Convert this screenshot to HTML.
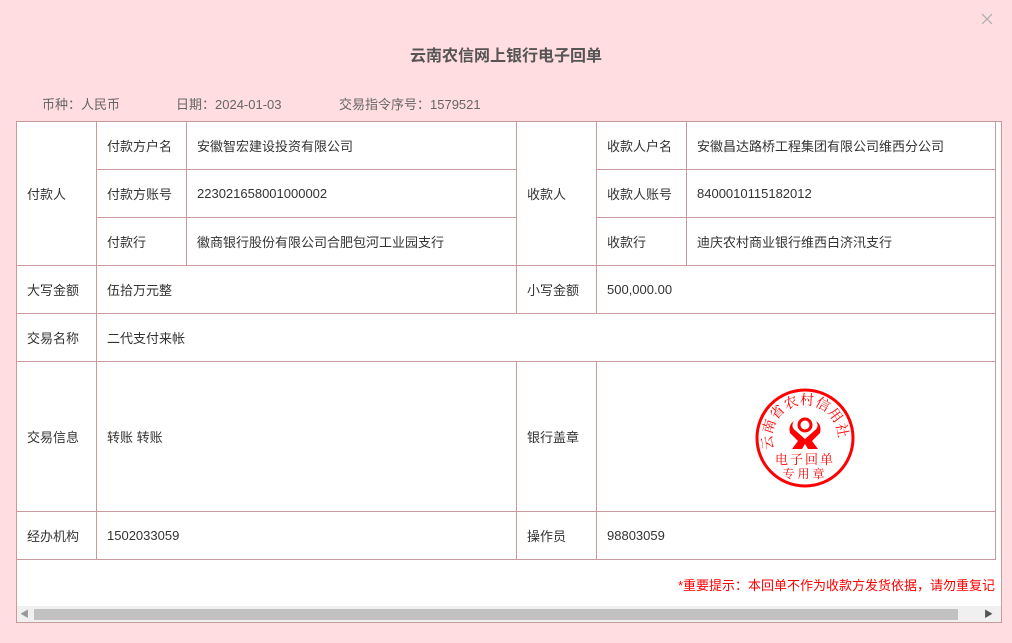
<!DOCTYPE html>
<html><head><meta charset="utf-8"><style>
*{margin:0;padding:0;box-sizing:border-box}
body{width:1012px;height:643px;background:#ffdde0;font-family:"Liberation Sans","Noto Sans CJK SC",sans-serif;position:relative;overflow:hidden;color:#333;font-size:13px}
.t{position:absolute;white-space:nowrap}
.box{position:absolute;left:16px;top:121px;width:986px;height:502px;border:1px solid #c9999c;background:#fff;overflow:hidden}
.c{position:absolute;border-right:1px solid #c9999c;border-bottom:1px solid #c9999c;display:flex;align-items:center;padding-left:10px;white-space:nowrap;background:#fff}
</style></head><body>
<svg style="position:absolute;left:981px;top:13px" width="12" height="12"><path d="M1 1L11 11M11 1L1 11" stroke="#aaa" stroke-width="1.2"/></svg>
<div class="t" style="left:0;width:1012px;text-align:center;top:42px;font-size:16px;font-weight:bold;color:#555">云南农信网上银行电子回单</div>
<div class="t" style="left:42px;top:94px;color:#666">币种：人民币</div>
<div class="t" style="left:176px;top:94px;color:#666">日期：2024-01-03</div>
<div class="t" style="left:339px;top:94px;color:#666">交易指令序号：1579521</div>
<div class="box">
<div class="c" style="left:0;top:0;width:80px;height:144px">付款人</div>
<div class="c" style="left:80px;top:0;width:90px;height:48px">付款方户名</div>
<div class="c" style="left:170px;top:0;width:330px;height:48px">安徽智宏建设投资有限公司</div>
<div class="c" style="left:80px;top:48px;width:90px;height:48px">付款方账号</div>
<div class="c" style="left:170px;top:48px;width:330px;height:48px">223021658001000002</div>
<div class="c" style="left:80px;top:96px;width:90px;height:48px">付款行</div>
<div class="c" style="left:170px;top:96px;width:330px;height:48px">徽商银行股份有限公司合肥包河工业园支行</div>
<div class="c" style="left:500px;top:0;width:80px;height:144px">收款人</div>
<div class="c" style="left:580px;top:0;width:90px;height:48px">收款人户名</div>
<div class="c" style="left:670px;top:0;width:309px;height:48px">安徽昌达路桥工程集团有限公司维西分公司</div>
<div class="c" style="left:580px;top:48px;width:90px;height:48px">收款人账号</div>
<div class="c" style="left:670px;top:48px;width:309px;height:48px">8400010115182012</div>
<div class="c" style="left:580px;top:96px;width:90px;height:48px">收款行</div>
<div class="c" style="left:670px;top:96px;width:309px;height:48px">迪庆农村商业银行维西白济汛支行</div>
<div class="c" style="left:0;top:144px;width:80px;height:48px">大写金额</div>
<div class="c" style="left:80px;top:144px;width:420px;height:48px">伍拾万元整</div>
<div class="c" style="left:500px;top:144px;width:80px;height:48px">小写金额</div>
<div class="c" style="left:580px;top:144px;width:399px;height:48px">500,000.00</div>
<div class="c" style="left:0;top:192px;width:80px;height:48px">交易名称</div>
<div class="c" style="left:80px;top:192px;width:899px;height:48px">二代支付来帐</div>
<div class="c" style="left:0;top:240px;width:80px;height:150px">交易信息</div>
<div class="c" style="left:80px;top:240px;width:420px;height:150px">转账 转账</div>
<div class="c" style="left:500px;top:240px;width:80px;height:150px">银行盖章</div>
<div class="c" style="left:580px;top:240px;width:399px;height:150px"></div>
<div class="c" style="left:0;top:390px;width:80px;height:48px">经办机构</div>
<div class="c" style="left:80px;top:390px;width:420px;height:48px">1502033059</div>
<div class="c" style="left:500px;top:390px;width:80px;height:48px">操作员</div>
<div class="c" style="left:580px;top:390px;width:399px;height:48px">98803059</div>
<div class="t" style="left:661px;top:453px;color:#f00">*重要提示：本回单不作为收款方发货依据，请勿重复记</div>
<div style="position:absolute;left:0;top:484px;width:986px;height:16px;background:#f0f0f0"></div>
<div style="position:absolute;left:17px;top:487px;width:924px;height:11px;background:#c1c1c1"></div>
<div class="t" style="left:3px;top:485px;font-size:9px;color:#999">◀</div>
<div class="t" style="left:967px;top:485px;font-size:9px;color:#555">▶</div>
</div>
<svg style="position:absolute;left:754px;top:387px" width="102" height="102" viewBox="0 0 102 102">
<defs><path id="arc" d="M20 62 A33 33 0 1 1 82 62"/></defs>
<circle cx="51" cy="51" r="48" fill="none" stroke="#f00" stroke-width="3"/>
<path d="M40 34 q-6 4 -4 12 l8 8 l-6 8 h10 l3 -5 l3 5 h10 l-6 -8 l8 -8 q2 -8 -4 -12 q4 6 -2 10 l-9 8 l-9 -8 q-6 -4 -2 -10z" fill="#f00"/>
<circle cx="51" cy="38" r="6" fill="none" stroke="#f00" stroke-width="3"/>
<text font-size="14" fill="#f00" font-family="Noto Serif CJK SC,serif" letter-spacing="0.5"><textPath href="#arc" startOffset="0">云南省农村信用社</textPath></text>
<text x="51" y="77" font-size="13" fill="#f00" text-anchor="middle" font-family="Noto Serif CJK SC,serif" letter-spacing="2">电子回单</text>
<text x="51" y="91" font-size="12" fill="#f00" text-anchor="middle" font-family="Noto Serif CJK SC,serif" letter-spacing="3">专用章</text>
</svg>
</body></html>
